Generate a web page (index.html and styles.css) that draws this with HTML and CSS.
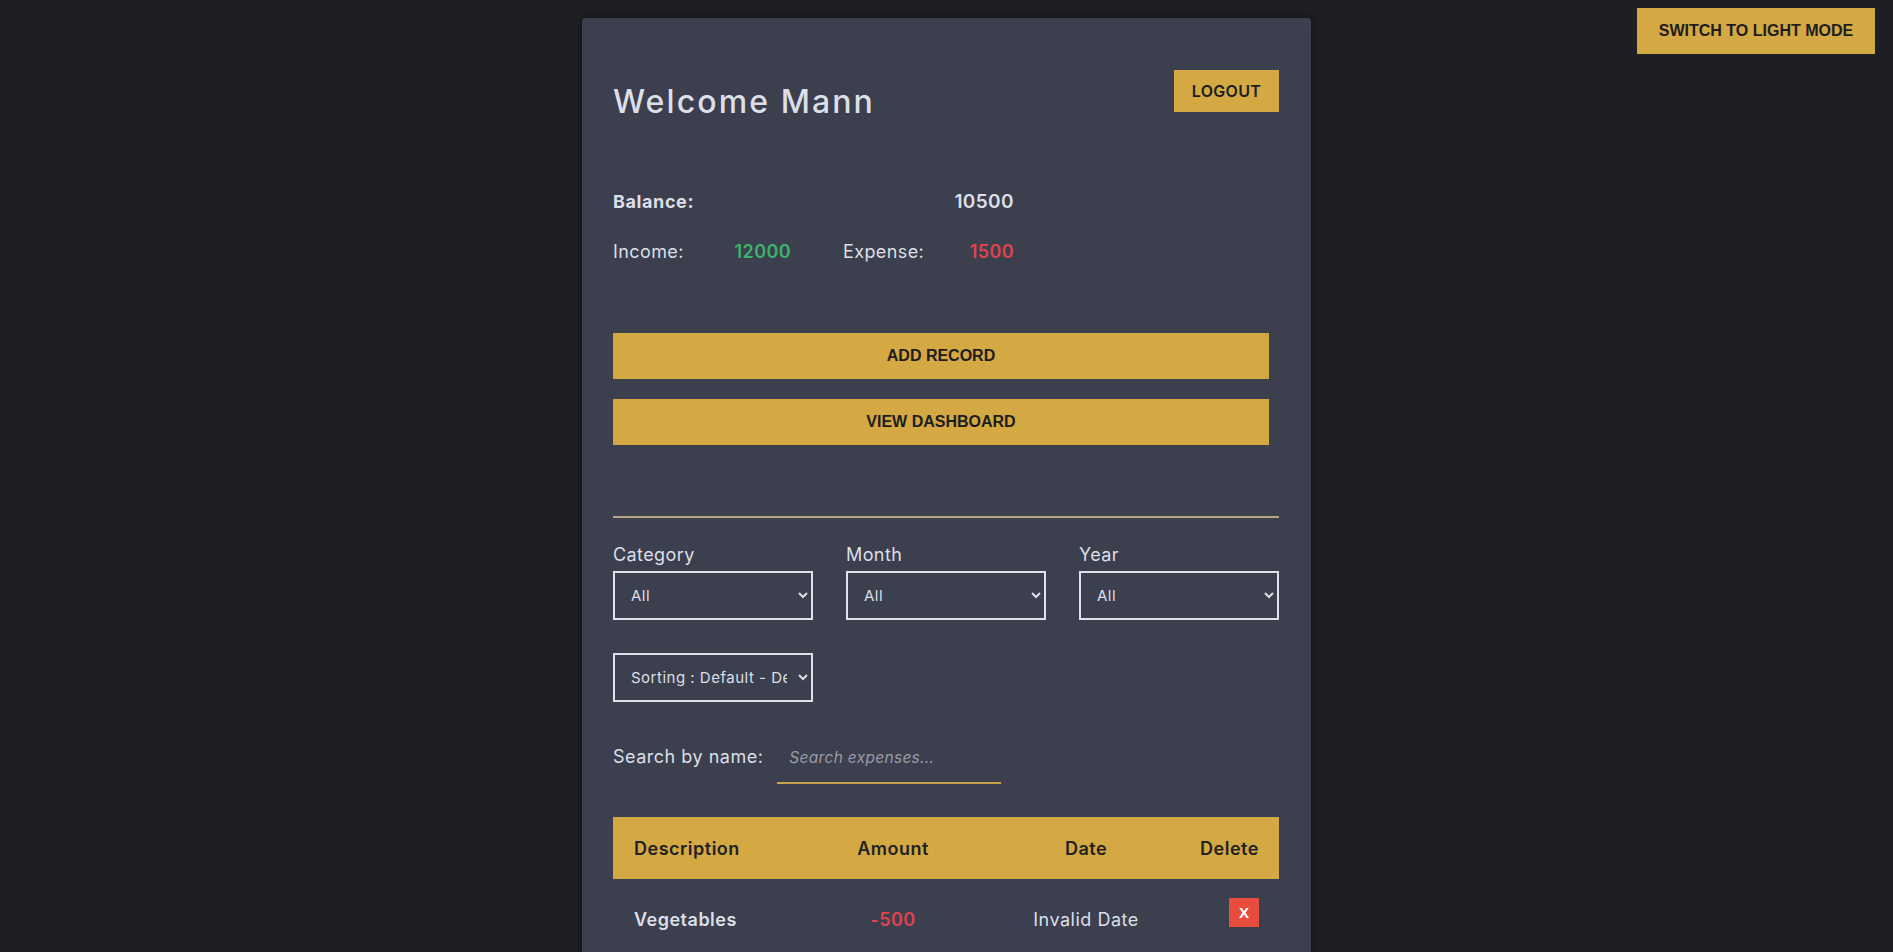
FILE: index.html
```html
<!DOCTYPE html>
<html lang="en">
<head>
<meta charset="utf-8">
<title>Expense Tracker</title>
<link rel="stylesheet" href="styles.css">
</head>
<body>
<button class="theme-toggle">SWITCH TO LIGHT MODE</button>
<main class="page">
  <section class="card">
    <header class="card-head">
      <h1 class="welcome">Welcome Mann</h1>
      <button class="logout">LOGOUT</button>
    </header>

    <div class="stats">
      <div class="balance-row">
        <span class="balance-label">Balance:</span>
        <span class="balance-value">10500</span>
      </div>
      <div class="ie-row">
        <div class="ie income">
          <span>Income:</span>
          <span class="income-value">12000</span>
        </div>
        <div class="ie expense">
          <span>Expense:</span>
          <span class="expense-value">1500</span>
        </div>
      </div>
    </div>

    <div class="actions">
      <button class="wide-btn">ADD RECORD</button>
      <button class="wide-btn">VIEW DASHBOARD</button>
    </div>

    <hr class="divider">

    <div class="filters">
      <label class="filter">
        <span class="filter-label">Category</span>
        <select class="select"><option>All</option></select>
      </label>
      <label class="filter">
        <span class="filter-label">Month</span>
        <select class="select"><option>All</option></select>
      </label>
      <label class="filter">
        <span class="filter-label">Year</span>
        <select class="select"><option>All</option></select>
      </label>
    </div>

    <div class="sort-row">
      <select class="select sort"><option>Sorting : Default - Descending</option></select>
    </div>

    <div class="search-row">
      <span class="search-label">Search by name:</span>
      <input class="search-input" type="text" placeholder="Search expenses...">
    </div>

    <table class="records">
      <colgroup>
        <col class="c1"><col class="c2"><col class="c3"><col class="c4">
      </colgroup>
      <thead>
        <tr>
          <th class="left">Description</th>
          <th>Amount</th>
          <th>Date</th>
          <th>Delete</th>
        </tr>
      </thead>
      <tbody>
        <tr>
          <td class="left desc">Vegetables</td>
          <td class="amount">-500</td>
          <td class="date">Invalid Date</td>
          <td class="del"><button class="x-btn">X</button></td>
        </tr>
      </tbody>
    </table>
  </section>
</main>
</body>
</html>
```

FILE: styles.css
```css
* { box-sizing: border-box; }

html, body {
  margin: 0;
  padding: 0;
  height: 100%;
  overflow: hidden;
}

body {
  background: #1e1f24;
  font-family: Inter, "Noto Sans", sans-serif;
  color: #dcdfe8;
}

.theme-toggle {
  position: fixed;
  top: 8px;
  right: 18px;
  width: 238px;
  height: 46px;
  background: #d4a843;
  color: #1d1d1d;
  border: none;
  font-family: "Liberation Sans", Arial, sans-serif;
  font-weight: 700;
  font-size: 16px;
  cursor: pointer;
}

.page {
  display: flex;
  justify-content: center;
  padding-top: 18px;
}

.card {
  width: 729px;
  background: #3b3f4e;
  border-radius: 4px;
  box-shadow: 0 0 12px rgba(0, 0, 0, 0.45);
  padding: 52px 32px 40px 31px;
  min-height: 1000px;
}

.card-head {
  display: flex;
  justify-content: space-between;
  align-items: flex-start;
}

.welcome {
  margin: 0;
  margin-top: 12px;
  font-size: 32px;
  font-weight: 500;
  letter-spacing: 2.1px;
  color: #dcdfe8;
  line-height: 40px;
}

.logout {
  width: 105px;
  height: 42px;
  background: #d4a843;
  border: none;
  color: #1d1d1d;
  font-family: Inter, sans-serif;
  font-weight: 600;
  font-size: 16px;
  letter-spacing: 0.3px;
}

.stats {
  margin-top: 68px;
  width: 401px;
}

.balance-row {
  display: flex;
  justify-content: space-between;
  font-size: 18px;
  font-weight: 700;
  letter-spacing: 0.6px;
  line-height: 24px;
}

.balance-value {
  font-size: 19px;
  font-weight: 600;
  letter-spacing: 0.4px;
}

.ie-row {
  display: flex;
  justify-content: space-between;
  margin-top: 26px;
  font-size: 18px;
  letter-spacing: 0.4px;
  line-height: 24px;
}

.ie {
  display: flex;
  justify-content: space-between;
}

.income { width: 178px; }
.expense { width: 171px; }

.income-value {
  color: #3db36c;
  font-weight: 600;
}

.expense-value {
  color: #e0434f;
  font-weight: 600;
}

.actions {
  margin-top: 69px;
  display: flex;
  flex-direction: column;
  gap: 20px;
  width: 656px;
}

.wide-btn {
  height: 46px;
  background: #d4a843;
  border: none;
  color: #1d1d1d;
  font-family: "Liberation Sans", Arial, sans-serif;
  font-weight: 700;
  font-size: 16px;
}

.divider {
  margin: 71px 0 0 0;
  border: none;
  height: 2px;
  background: #b5a582;
}

.filters {
  margin-top: 25px;
  display: flex;
  justify-content: space-between;
}

.filter {
  display: flex;
  flex-direction: column;
  width: 200px;
}

.filter-label {
  font-size: 18px;
  letter-spacing: 0.4px;
  line-height: 24px;
  color: #dcdfe8;
}

.select {
  margin-top: 4px;
  width: 200px;
  height: 49px;
  background: #3b3f4e;
  border: 2px solid #dfe2ea;
  color: #dcdfe8;
  font-family: Inter, sans-serif;
  font-size: 15px;
  letter-spacing: 0.5px;
  padding: 0 8px 0 12px;
  border-radius: 0;
}

.sort-row {
  margin-top: 33px;
}

.sort {
  margin-top: 0;
}

.search-row {
  margin-top: 39px;
  display: flex;
  align-items: flex-start;
}

.search-label {
  font-size: 18px;
  letter-spacing: 0.5px;
  line-height: 24px;
  padding-top: 4px;
}

.search-input {
  margin-left: 14px;
  width: 224px;
  height: 43px;
  background: transparent;
  border: none;
  border-bottom: 2px solid #c9a24c;
  color: #dcdfe8;
  font-family: Inter, sans-serif;
  font-size: 15.5px;
  letter-spacing: 0.3px;
  padding: 0 12px 8px;
  outline: none;
}

.search-input::placeholder {
  color: #9a9ca6;
  font-style: italic;
}

.records {
  margin-top: 33px;
  width: 666px;
  border-collapse: collapse;
  table-layout: fixed;
}

.c1 { width: 181px; }
.c2 { width: 198px; }
.c3 { width: 188px; }
.c4 { width: 99px; }

.records thead tr {
  background: #d4a843;
}

.records th {
  height: 62px;
  padding: 0 18px;
  font-size: 18px;
  letter-spacing: 0.5px;
  font-weight: 600;
  color: #222;
  text-align: center;
}

.records th.left { padding-left: 21px; }

.records .left {
  text-align: left;
}

.records td {
  padding: 29px 18px 10px;
  text-align: center;
  font-size: 18px;
  letter-spacing: 0.5px;
  line-height: 24px;
  vertical-align: top;
  white-space: nowrap;
}

.records td.left { text-align: left; padding-left: 21px; }

.desc {
  font-weight: 600;
  color: #dcdfe8;
}

.amount {
  color: #e0434f;
  font-weight: 600;
}

.date {
  color: #dcdfe8;
}

.records td.del {
  padding-top: 19px;
  padding-right: 20px;
  text-align: right;
}

.x-btn {
  width: 30px;
  height: 29px;
  background: #e74c3c;
  border: none;
  color: #fff;
  font-family: "Liberation Sans", Arial, sans-serif;
  font-weight: 700;
  font-size: 15px;
  padding: 0;
}
```
